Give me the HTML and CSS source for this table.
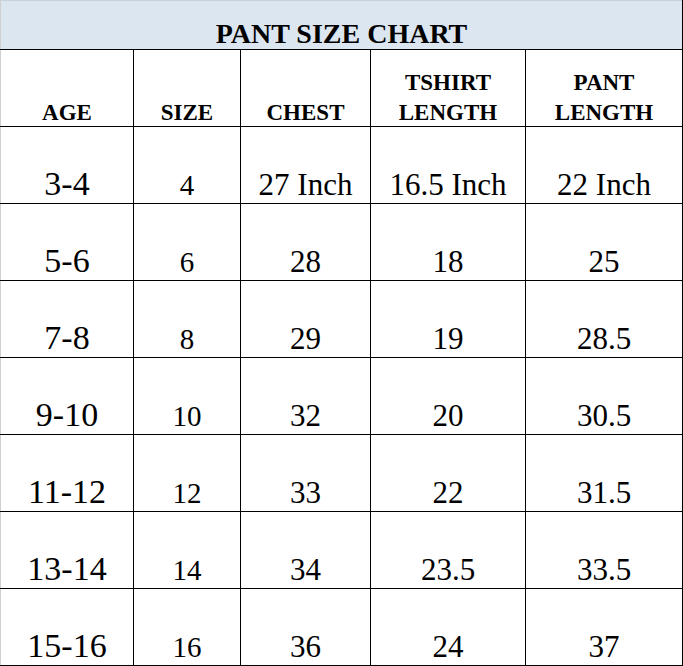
FILE: index.html
```html
<!DOCTYPE html>
<html>
<head>
<meta charset="utf-8">
<link rel="stylesheet" href="styles.css">
</head>
<body>
<table class="chart">
  <colgroup>
    <col class="c-age">
    <col class="c-size">
    <col class="c-chest">
    <col class="c-tshirt">
    <col class="c-pant">
  </colgroup>
  <thead>
    <tr class="title-row"><th colspan="5" class="title">PANT SIZE CHART</th></tr>
    <tr class="head-row">
      <th class="h first"><span class="h-text">AGE</span></th>
      <th class="h"><span class="h-text">SIZE</span></th>
      <th class="h"><span class="h-text">CHEST</span></th>
      <th class="h"><span class="h-text">TSHIRT<br>LENGTH</span></th>
      <th class="h"><span class="h-text">PANT<br>LENGTH</span></th>
    </tr>
  </thead>
  <tbody>
    <tr><td class="age first">3-4</td><td class="size">4</td><td class="val">27 Inch</td><td class="val">16.5 Inch</td><td class="val">22 Inch</td></tr>
    <tr><td class="age first">5-6</td><td class="size">6</td><td class="val">28</td><td class="val">18</td><td class="val">25</td></tr>
    <tr><td class="age first">7-8</td><td class="size">8</td><td class="val">29</td><td class="val">19</td><td class="val">28.5</td></tr>
    <tr><td class="age first">9-10</td><td class="size">10</td><td class="val">32</td><td class="val">20</td><td class="val">30.5</td></tr>
    <tr><td class="age first">11-12</td><td class="size">12</td><td class="val">33</td><td class="val">22</td><td class="val">31.5</td></tr>
    <tr><td class="age first">13-14</td><td class="size">14</td><td class="val">34</td><td class="val">23.5</td><td class="val">33.5</td></tr>
    <tr><td class="age first">15-16</td><td class="size">16</td><td class="val">36</td><td class="val">24</td><td class="val">37</td></tr>
  </tbody>
</table>
</body>
</html>
```
FILE: styles.css
```css
html, body {
  margin: 0;
  padding: 0;
  background: #ffffff;
}

body {
  font-family: "Liberation Serif", "Times New Roman", serif;
}

.chart {
  border-collapse: collapse;
  table-layout: fixed;
  width: 682px;
  font-family: "Liberation Serif", "Times New Roman", serif;
  color: #000;
}

.c-age { width: 133px; }
.c-size { width: 107px; }
.c-chest { width: 130px; }
.c-tshirt { width: 155px; }
.c-pant { width: 157px; }

.chart th,
.chart td {
  border: 1px solid #000;
  padding: 0;
  text-align: center;
  vertical-align: bottom;
}

.chart .first {
  border-left: 1px solid #d0d0d0;
}

.title-row { height: 49px; }

.chart .title {
  background: #dce6f1;
  border-top: 1px solid #c8d0da;
  border-left: 1px solid #d0d0d0;
  font-size: 28px;
  font-weight: bold;
  line-height: 30px;
}

.head-row { height: 77px; }

.chart .h {
  font-size: 23px;
  font-weight: bold;
  line-height: 30px;
}

.h-text {
  display: block;
  margin-bottom: -2px;
}

.chart tbody tr { height: 77px; }

.chart .age {
  font-size: 34px;
  line-height: 39px;
}

.chart .size {
  font-size: 29px;
  line-height: 36px;
}

.chart .val {
  font-size: 31px;
  line-height: 37px;
}
```
